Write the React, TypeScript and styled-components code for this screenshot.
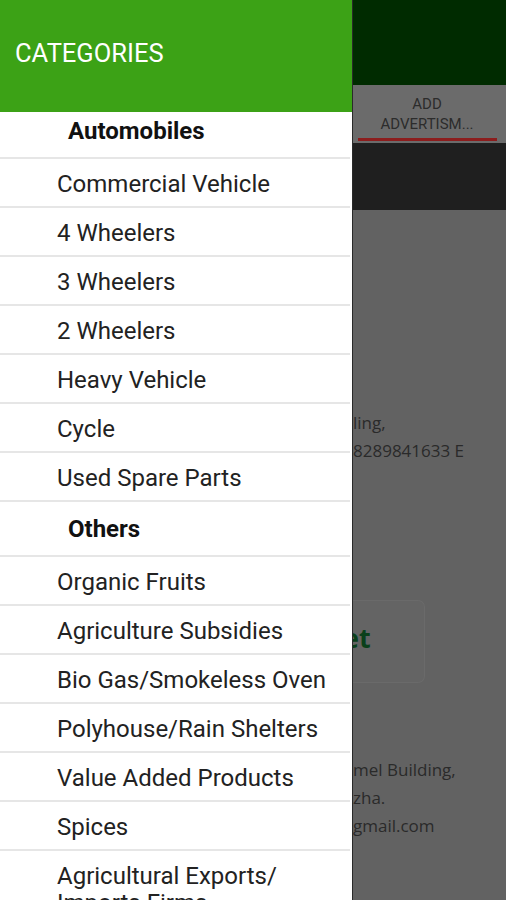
import React from 'react';
import styled, { createGlobalStyle } from 'styled-components';

const GlobalStyle = createGlobalStyle`
  html, body {
    margin: 0;
    padding: 0;
    overflow: hidden;
  }
  body {
    font-family: Roboto, 'Liberation Sans', sans-serif;
  }
`;

interface Section {
  title: string;
  items: string[];
}

const sections: Section[] = [
  {
    title: 'Automobiles',
    items: [
      'Commercial Vehicle',
      '4 Wheelers',
      '3 Wheelers',
      '2 Wheelers',
      'Heavy Vehicle',
      'Cycle',
      'Used Spare Parts',
    ],
  },
  {
    title: 'Others',
    items: [
      'Organic Fruits',
      'Agriculture Subsidies',
      'Bio Gas/Smokeless Oven',
      'Polyhouse/Rain Shelters',
      'Value Added Products',
      'Spices',
      'Agricultural Exports/ Imports Firms',
    ],
  },
];

// only the part of the page that peeks out beside the open drawer
const App: React.FC = () => {
  return (
    <Screen>
      <GlobalStyle />
      <Page>
        <AppBar />
        <TabBar>
          <Tab>
            <TabLabel>
              ADD
              <br />
              ADVERTISM...
            </TabLabel>
            <TabIndicator />
          </Tab>
        </TabBar>
        <SubBar />
        <PageBody>
          <Address $top={199}>
            <Line>ling,</Line>
            <Line>8289841633 E</Line>
          </Address>
          <Banner>
            <BannerText>et</BannerText>
          </Banner>
          <Address $top={73}>
            <Line>mel Building,</Line>
            <Line>zha.</Line>
            <Line>gmail.com</Line>
          </Address>
        </PageBody>
      </Page>

      <Drawer>
        <DrawerHeader>
          <DrawerTitle>CATEGORIES</DrawerTitle>
        </DrawerHeader>
        <ListViewport>
          <List>
            {sections.map((section) => (
              <React.Fragment key={section.title}>
                <SectionRow>{section.title}</SectionRow>
                {section.items.map((item) => (
                  <ItemRow key={item}>{item}</ItemRow>
                ))}
              </React.Fragment>
            ))}
          </List>
        </ListViewport>
      </Drawer>
    </Screen>
  );
};

const Screen = styled.div`
  position: relative;
  width: 506px;
  height: 900px;
  overflow: hidden;
  background: #626262;
`;

const Page = styled.div`
  display: flex;
  flex-direction: column;
  height: 100%;
`;

const AppBar = styled.div`
  height: 85px;
  background: #002b00;
`;

const TabBar = styled.div`
  height: 58px;
  background: #6b6b6b;
  display: flex;
  justify-content: flex-end;
`;

const Tab = styled.div`
  width: 150px;
  margin-right: 4px;
  display: flex;
  flex-direction: column;
  justify-content: flex-end;
`;

const TabLabel = styled.div`
  text-align: center;
  font-size: 15px;
  line-height: 20px;
  color: #2c2c2c;
  padding-bottom: 4px;
`;

const TabIndicator = styled.div`
  height: 3px;
  margin: 0 5px 2px 6px;
  background: #8c1d1d;
`;

const SubBar = styled.div`
  height: 67px;
  background: #1f1f1f;
`;

const PageBody = styled.div`
  flex: 1;
  padding-left: 353px;
  display: flex;
  flex-direction: column;
`;

const Address = styled.div<{ $top: number }>`
  margin-top: ${(p) => p.$top}px;
  font-family: 'Open Sans', 'Noto Sans', sans-serif;
  font-size: 17px;
  line-height: 28px;
  color: #2a2a2a;
`;

const Line = styled.div`
  white-space: nowrap;
`;

const Banner = styled.div`
  margin-top: 135px;
  width: 72px;
  height: 83px;
  box-sizing: border-box;
  border: 1px solid #6a6a6a;
  border-left: none;
  border-radius: 0 7px 7px 0;
  background: #646464;
  display: flex;
  align-items: center;
  padding-bottom: 8px;
`;

// the start of the word sits under the drawer
const BannerText = styled.div`
  margin-left: -10px;
  font-family: 'Open Sans', 'Noto Sans', sans-serif;
  font-weight: 700;
  font-size: 27px;
  color: #0a401a;
`;

const Drawer = styled.div`
  position: absolute;
  left: 0;
  top: 0;
  bottom: 0;
  width: 352px;
  background: #ffffff;
  border-right: 1px solid #2a2a2a;
  display: flex;
  flex-direction: column;
`;

const DrawerHeader = styled.div`
  height: 112px;
  flex-shrink: 0;
  background: #3ca216;
  display: flex;
  align-items: center;
  padding: 0 0 6px 15px;
  box-sizing: border-box;
`;

const DrawerTitle = styled.div`
  color: #ffffff;
  font-size: 25.5px;
`;

const ListViewport = styled.div`
  flex: 1;
  overflow: hidden;
`;

// list is scrolled a few pixels, the first header sits under the bar
const List = styled.div`
  margin-top: -8px;
`;

const SectionRow = styled.div`
  height: 53px;
  margin-right: 2px;
  border-bottom: 2px solid #e6e6e6;
  padding-left: 68px;
  display: flex;
  align-items: center;
  font-size: 24px;
  font-weight: 700;
  color: #111111;
`;

const ItemRow = styled.div`
  min-height: 49px;
  margin-right: 2px;
  border-bottom: 2px solid #e6e6e6;
  padding: 12px 20px 8px 57px;
  box-sizing: border-box;
  font-size: 24px;
  line-height: 27px;
  color: #222222;
`;

export default App;
